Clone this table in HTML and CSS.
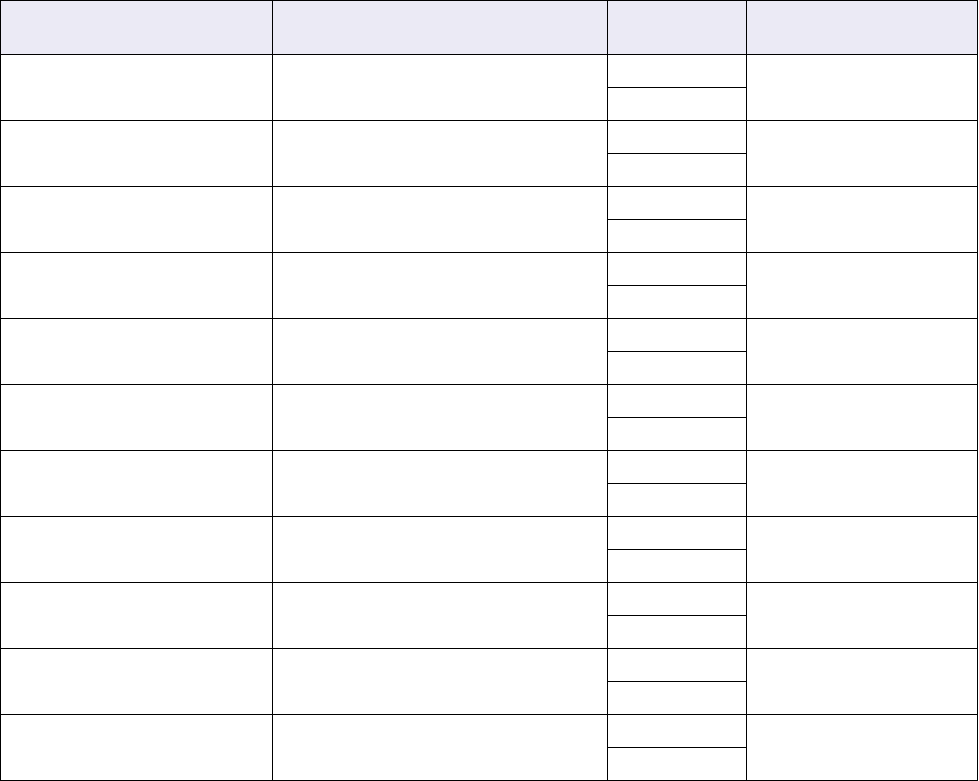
FILE: index.html
```html
<!DOCTYPE html>
<html>
<head>
<meta charset="utf-8">
<link rel="stylesheet" href="styles.css">
</head>
<body>
<table class="grid">
<colgroup><col class="c1"><col class="c2"><col class="c3"><col class="c4"></colgroup>
<thead>
<tr class="head"><th></th><th></th><th></th><th></th></tr>
</thead>
<tbody>
<tr><td rowspan="2"></td><td rowspan="2"></td><td></td><td rowspan="2"></td></tr><tr><td></td></tr>
<tr><td rowspan="2"></td><td rowspan="2"></td><td></td><td rowspan="2"></td></tr><tr><td></td></tr>
<tr><td rowspan="2"></td><td rowspan="2"></td><td></td><td rowspan="2"></td></tr><tr><td></td></tr>
<tr><td rowspan="2"></td><td rowspan="2"></td><td></td><td rowspan="2"></td></tr><tr><td></td></tr>
<tr><td rowspan="2"></td><td rowspan="2"></td><td></td><td rowspan="2"></td></tr><tr><td></td></tr>
<tr><td rowspan="2"></td><td rowspan="2"></td><td></td><td rowspan="2"></td></tr><tr><td></td></tr>
<tr><td rowspan="2"></td><td rowspan="2"></td><td></td><td rowspan="2"></td></tr><tr><td></td></tr>
<tr><td rowspan="2"></td><td rowspan="2"></td><td></td><td rowspan="2"></td></tr><tr><td></td></tr>
<tr><td rowspan="2"></td><td rowspan="2"></td><td></td><td rowspan="2"></td></tr><tr><td></td></tr>
<tr><td rowspan="2"></td><td rowspan="2"></td><td></td><td rowspan="2"></td></tr><tr><td></td></tr>
<tr><td rowspan="2"></td><td rowspan="2"></td><td></td><td rowspan="2"></td></tr><tr><td></td></tr>
</tbody>
</table>
</body>
</html>
```
FILE: styles.css
```css
html, body {
  margin: 0;
  padding: 0;
  background: #ffffff;
  font-family: "Liberation Sans", Arial, sans-serif;
}
.grid {
  border-collapse: separate;
  border-spacing: 1px;
  background: #000000;
  table-layout: fixed;
  width: 978px;
}
.c1 { width: 271px; }
.c2 { width: 334px; }
.c3 { width: 138px; }
.c4 { width: 230px; }
.grid th, .grid td {
  padding: 0;
  background: #ffffff;
  height: 32px;
  box-sizing: border-box;
}
.grid .head th {
  background: #ebeaf5;
  height: 53px;
}
```
